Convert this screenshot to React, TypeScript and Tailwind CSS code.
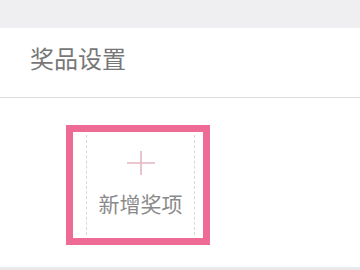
const cjk = { fontFamily: '"Noto Sans CJK SC", "Noto Sans", sans-serif' };

export default function App() {
  return (
    <div className="flex h-[270px] w-[360px] flex-col bg-[#e9e9eb]" style={cjk}>
      <div className="h-[28px] shrink-0 bg-[#efeff1]" />
      <header className="flex h-[70px] shrink-0 items-center border-b border-[#dcdcde] bg-white pb-[10px] pl-[30px]">
        <h1 className="text-[24px] leading-none text-[#777]">奖品设置</h1>
      </header>
      <section className="h-[169px] shrink-0 bg-white pl-[66px] pt-[27px]">
        <div className="h-[120px] w-[144px] border-[7px] border-[#ee6b95] bg-white pl-[13px] pr-[8px] py-[3px]">
          <button className="flex h-full w-full flex-col items-center border-x border-dashed border-[#d8d8d8] pt-[16px]">
            <svg width="30" height="24" viewBox="0 0 30 24" className="text-[#e3b7c1]">
              <path d="M15 0v24M1 12h28" stroke="currentColor" strokeWidth="1.6" fill="none" />
            </svg>
            <span className="mt-[18px] text-[21px] leading-none text-[#8a8a8a]">新增奖项</span>
          </button>
        </div>
      </section>
    </div>
  );
}
